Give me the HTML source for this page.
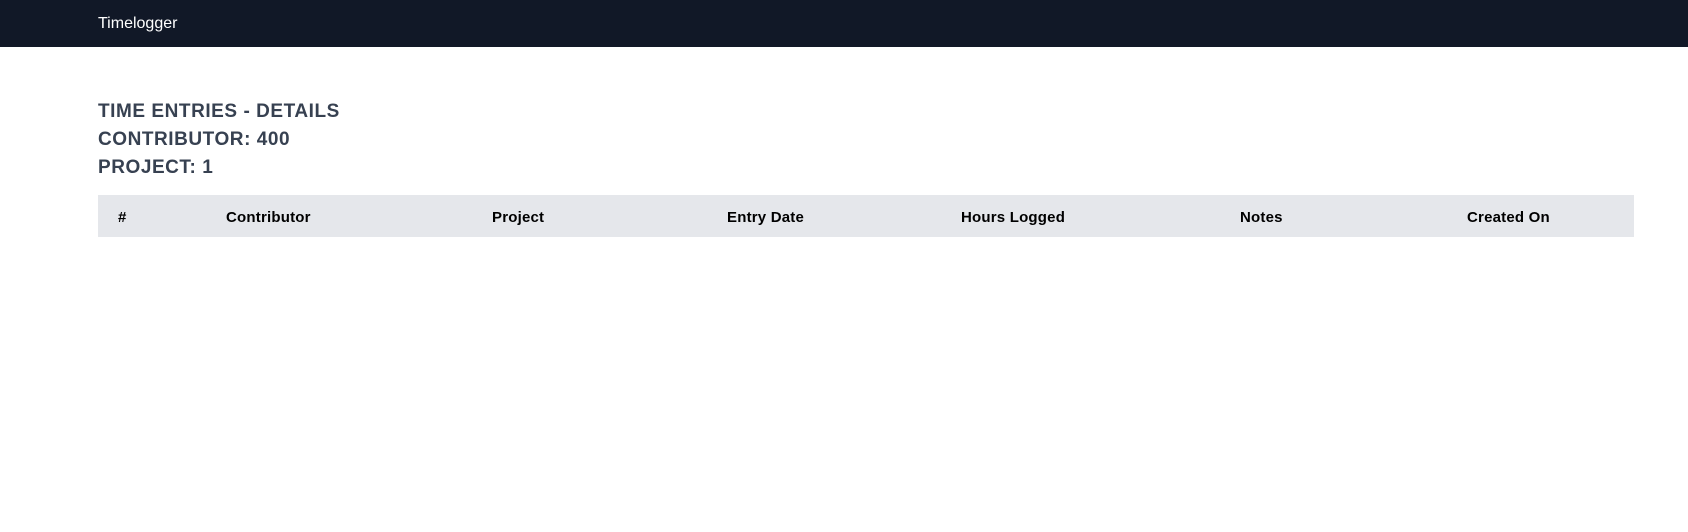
<!DOCTYPE html>
<html><head><meta charset="utf-8"><style>
body{margin:0;width:1688px;height:532px;background:#fff;font-family:"Liberation Sans",sans-serif;position:relative;overflow:hidden}
.nav{position:absolute;left:0;top:0;width:1688px;height:47px;background:#111827}
.nav span{position:absolute;left:98px;top:15px;color:#fff;font-size:16px}
.h{position:absolute;left:98px;color:#374151;font-weight:bold;font-size:19px;line-height:28px;letter-spacing:0.55px}
.tb{position:absolute;left:98px;top:195px;width:1536px;height:42px;background:#e5e7eb}
.tb span{position:absolute;top:15px;font-weight:bold;font-size:15px;color:#000;line-height:16px;letter-spacing:0.2px}
</style></head><body>
<div class="nav"><span>Timelogger</span></div>
<div class="h" style="top:98px">TIME ENTRIES - DETAILS</div>
<div class="h" style="top:126px">CONTRIBUTOR: 400</div>
<div class="h" style="top:154px">PROJECT: 1</div>
<div class="tb">
<span style="left:20px">#</span>
<span style="left:128px">Contributor</span>
<span style="left:394px">Project</span>
<span style="left:629px">Entry Date</span>
<span style="left:863px">Hours Logged</span>
<span style="left:1142px">Notes</span>
<span style="left:1369px">Created On</span>
</div>
</body></html>
